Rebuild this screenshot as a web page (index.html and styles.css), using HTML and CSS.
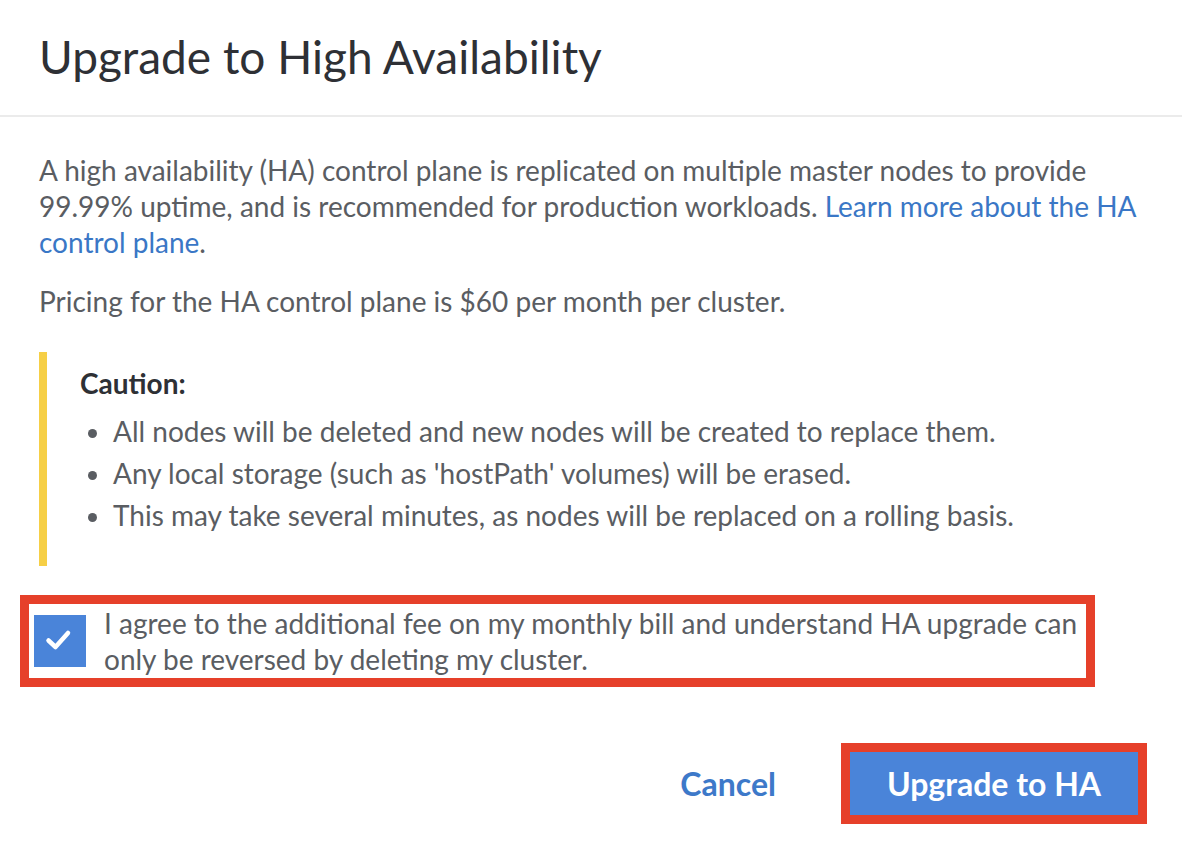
FILE: index.html
```html
<!DOCTYPE html>
<html lang="en">
<head>
<meta charset="utf-8">
<title>Upgrade to High Availability</title>
<link rel="stylesheet" href="styles.css">
</head>
<body>
<div class="dialog">
  <header class="dialog-header">
    <h1 class="dialog-title">Upgrade to High Availability</h1>
  </header>
  <section class="dialog-body">
    <p class="para">A high availability (HA) control plane is replicated on multiple master nodes to provide 99.99% uptime, and is recommended for production workloads. <a class="link" href="#">Learn more about the HA control plane</a>.</p>
    <p class="para">Pricing for the HA control plane is $60 per month per cluster.</p>
    <div class="caution">
      <div class="caution-title">Caution:</div>
      <ul class="caution-list">
        <li>All nodes will be deleted and new nodes will be created to replace them.</li>
        <li>Any local storage (such as 'hostPath' volumes) will be erased.</li>
        <li>This may take several minutes, as nodes will be replaced on a rolling basis.</li>
      </ul>
    </div>
    <label class="agree">
      <span class="checkbox">
        <svg viewBox="0 0 52 52" width="52" height="52" aria-hidden="true"><path d="M14.5 25.5 L21.5 32 L34 18" fill="none" stroke="#fff" stroke-width="4.5" stroke-linecap="round" stroke-linejoin="round"/></svg>
      </span>
      <span class="agree-text">I agree to the additional fee on my monthly bill and understand HA upgrade can only be reversed by deleting my cluster.</span>
    </label>
  </section>
  <footer class="dialog-footer">
    <button class="btn-cancel" type="button">Cancel</button>
    <button class="btn-primary" type="button">Upgrade to HA</button>
  </footer>
</div>
</body>
</html>
```
FILE: styles.css
```css
html, body {
  margin: 0;
  padding: 0;
  background: #ffffff;
}
body {
  font-family: Lato, "Open Sans", "Liberation Sans", sans-serif;
  color: #5a5d62;
}
.dialog {
  width: 1182px;
  padding-bottom: 20px;
}
.dialog-header {
  padding: 33px 39px 34px;
  border-bottom: 2px solid #ebebeb;
}
.dialog-title {
  margin: 0;
  font-size: 46px;
  line-height: 48px;
  font-weight: 400;
  color: #2e3035;
}
.dialog-body {
  padding: 35px 39px 0;
}
.para {
  margin: 0 0 23px;
  font-size: 28px;
  line-height: 36px;
}
.link {
  color: #3a77c6;
  text-decoration: none;
}
.caution {
  margin-top: 33px;
  border-left: 8px solid #f6cf46;
  padding: 13px 0 30px 33px;
}
.caution-title {
  font-size: 28px;
  line-height: 36px;
  font-weight: 700;
  color: #2e3035;
}
.caution-list {
  margin: 9px 0 0;
  padding-left: 33px;
  font-size: 28px;
  line-height: 42px;
}
.agree {
  display: flex;
  align-items: center;
  gap: 18px;
  width: 1075px;
  box-sizing: border-box;
  margin: 29px 0 0 -19px;
  padding: 1px 8px 1px 5px;
  border: 9px solid #e6402a;
}
.checkbox {
  flex: none;
  width: 52px;
  height: 52px;
  background: #4a84d9;
  display: flex;
}
.agree-text {
  font-size: 28px;
  line-height: 36px;
}
.dialog-footer {
  display: flex;
  justify-content: flex-end;
  align-items: center;
  gap: 65px;
  padding: 56px 35px 0 0;
}
.btn-cancel {
  border: 0;
  background: none;
  padding: 0;
  font-family: inherit;
  font-size: 32px;
  font-weight: 700;
  color: #3d79c9;
}
.btn-primary {
  box-sizing: content-box;
  width: 288px;
  height: 63px;
  padding: 0;
  border: 9px solid #e6402a;
  background: #4a84d9;
  color: #ffffff;
  font-family: inherit;
  font-size: 32px;
  font-weight: 700;
}
```
